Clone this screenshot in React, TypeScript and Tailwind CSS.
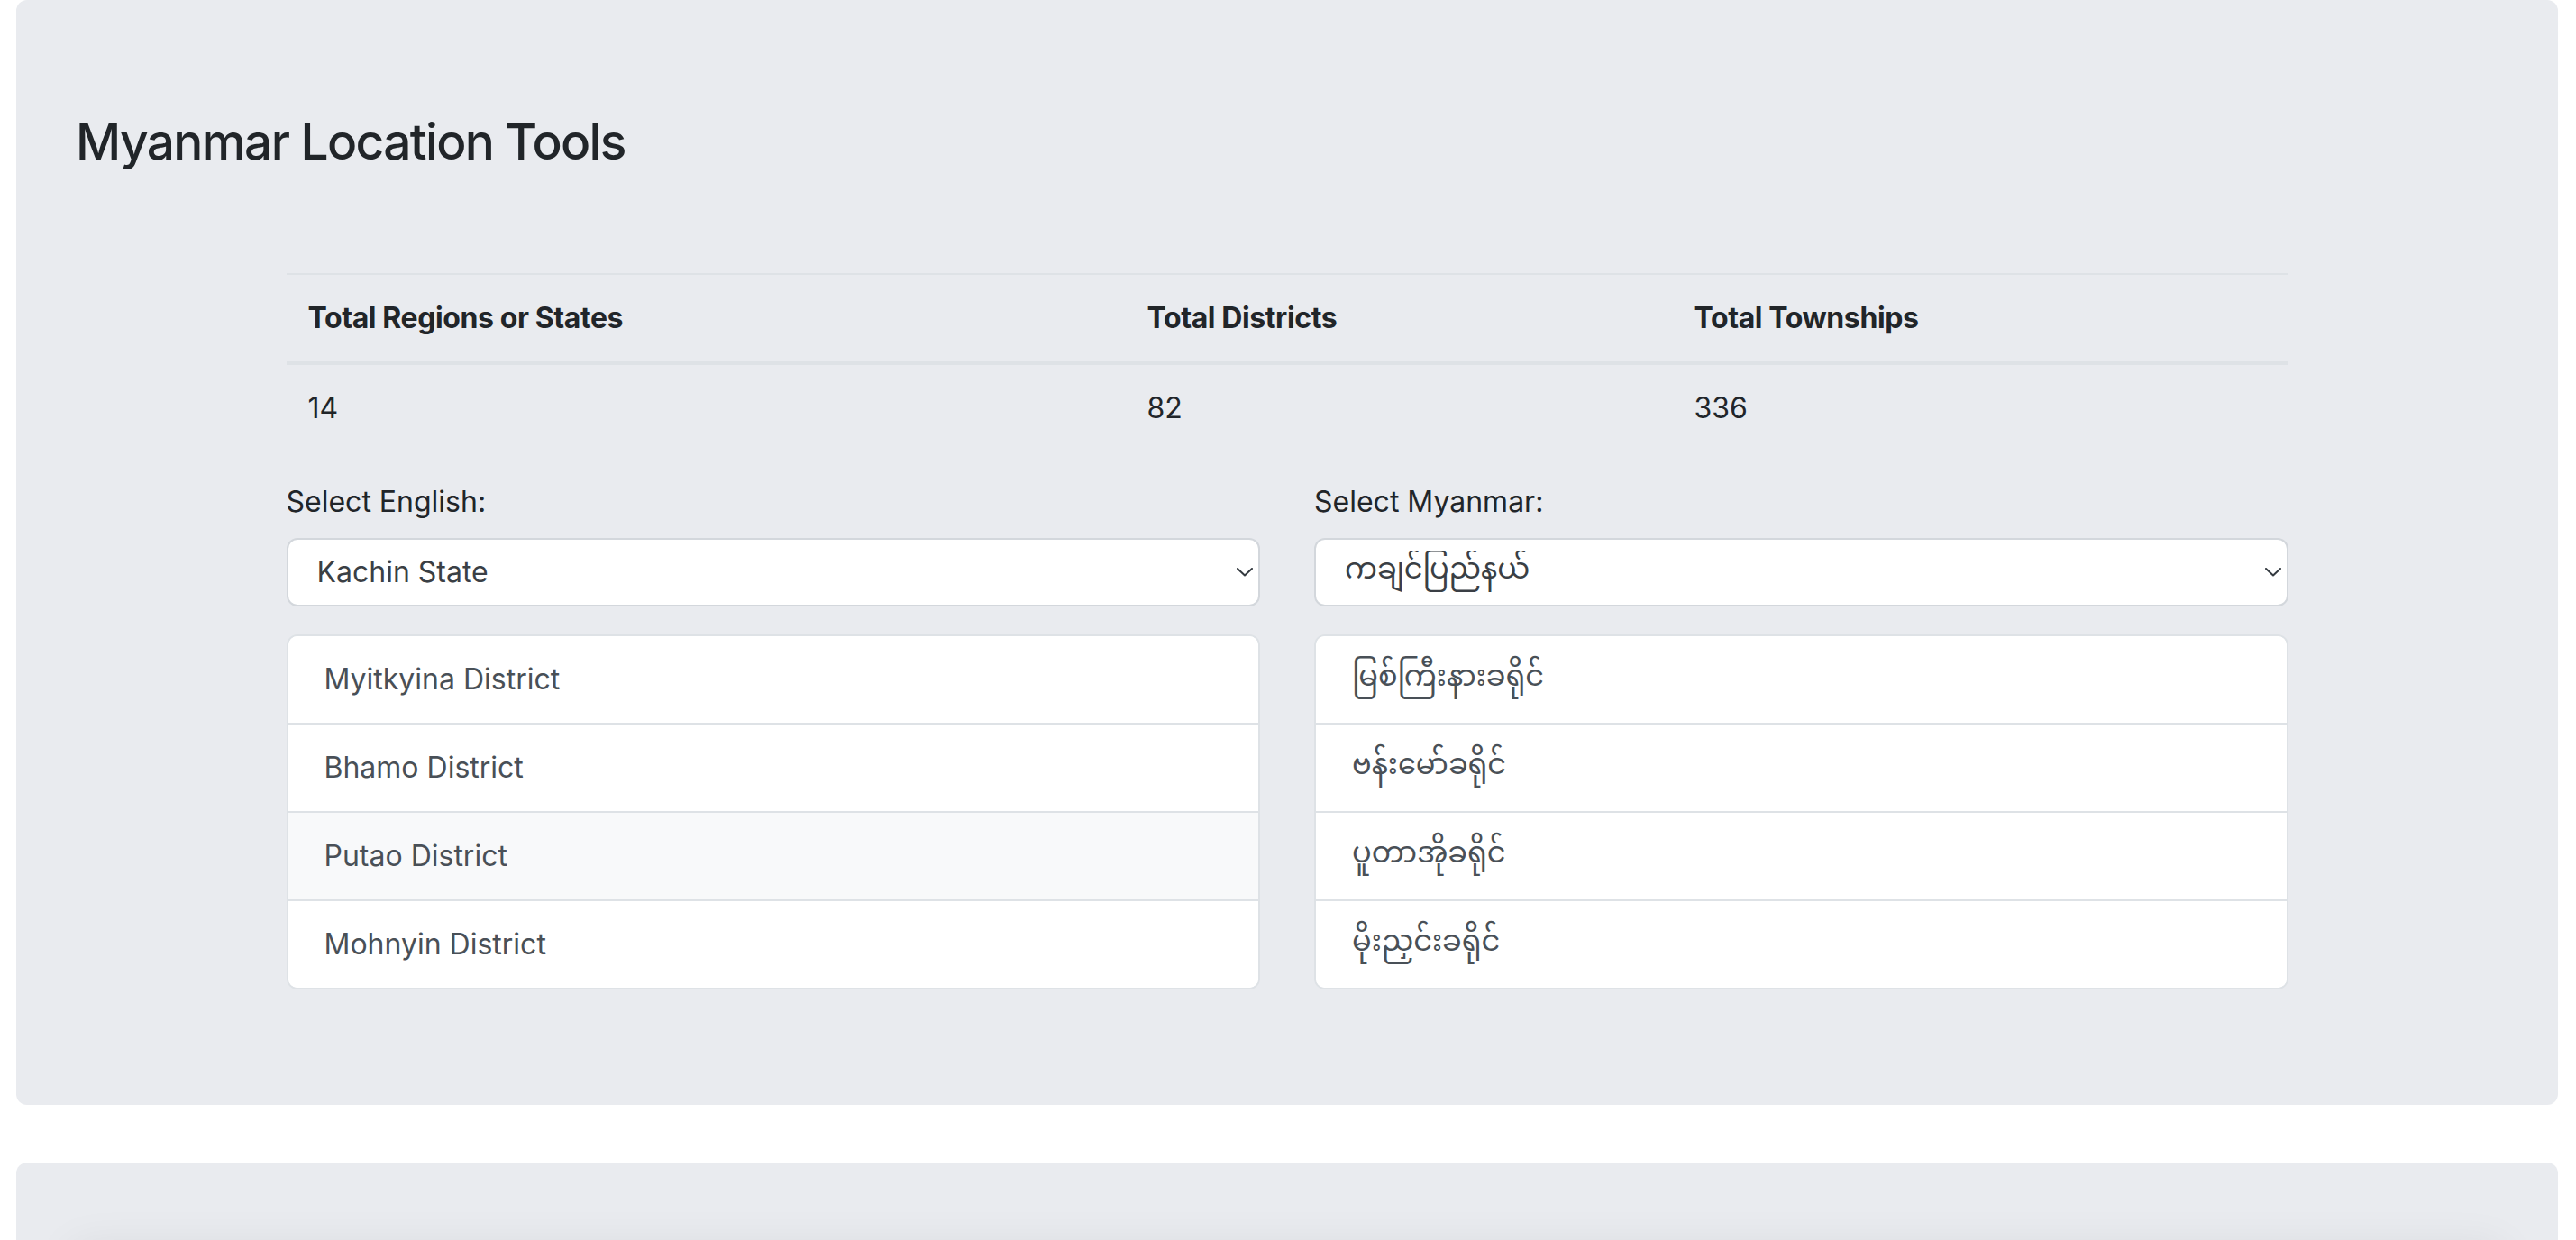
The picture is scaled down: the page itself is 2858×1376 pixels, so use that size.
import { useState } from "react";

const regions = [
  { en: "Kachin State", mm: "ကချင်ပြည်နယ်" },
];

const districts = [
  { en: "Myitkyina District", mm: "မြစ်ကြီးနားခရိုင်" },
  { en: "Bhamo District", mm: "ဗန်းမော်ခရိုင်" },
  { en: "Putao District", mm: "ပူတာအိုခရိုင်" },
  { en: "Mohnyin District", mm: "မိုးညှင်းခရိုင်" },
];

const mmFont =
  "font-['Noto_Sans_Myanmar','Padauk','Myanmar_Text','Noto_Sans','Inter',sans-serif]";

function Chevron() {
  return (
    <svg
      width="18"
      height="10"
      viewBox="0 0 18 10"
      className="pointer-events-none absolute right-[8px] top-1/2 -translate-y-1/2"
    >
      <polyline
        points="1,1 9,8.5 17,1"
        fill="none"
        stroke="#343a40"
        strokeWidth="2"
        strokeLinecap="round"
        strokeLinejoin="round"
      />
    </svg>
  );
}

function SelectBox({
  value,
  options,
  onChange,
  myanmar,
}: {
  value: number;
  options: string[];
  onChange: (i: number) => void;
  myanmar?: boolean;
}) {
  return (
    <div className="relative">
      <select
        value={value}
        onChange={(e) => onChange(Number(e.target.value))}
        className={`h-[76px] w-full appearance-none rounded-[12px] border-2 border-[#d3d7dc] bg-white pl-[32px] pr-[48px] text-[32px] text-[#3a3f45] outline-none ${
          myanmar ? mmFont : ""
        }`}
      >
        {options.map((o, i) => (
          <option key={o} value={i}>
            {o}
          </option>
        ))}
      </select>
      <Chevron />
    </div>
  );
}

function DistrictList({
  items,
  hovered,
  myanmar,
}: {
  items: string[];
  hovered: number;
  myanmar?: boolean;
}) {
  return (
    <ul className="mt-[31px] overflow-hidden rounded-[12px] border-2 border-[#dee2e6] bg-white">
      {items.map((item, i) => (
        <li
          key={item}
          className={`flex h-[48px] box-content items-center py-[24px] pl-[40px] text-[32px] text-[#495057] ${
            i > 0 ? "border-t-2 border-[#dee2e6]" : ""
          } ${i === hovered ? "bg-[#f8f9fa]" : "bg-white"} ${myanmar ? mmFont : ""}`}
        >
          {item}
        </li>
      ))}
    </ul>
  );
}

export default function App() {
  const [region, setRegion] = useState(0);

  return (
    <div className="min-h-screen bg-white font-['Inter','Liberation_Sans',sans-serif] text-[#212529]">
      <div className="ml-[18px] mr-[20px] rounded-[12px] bg-[#e9ebef] pb-[128px] pt-[124px]">
        <h3 className="pl-[66px] text-[55px] font-medium leading-[67px] tracking-[-1.6px]">
          Myanmar Location Tools
        </h3>

        <div className="mx-auto mt-[112px] w-[2221px]">
          <table className="w-full border-collapse text-left text-[32px] leading-[48px]">
            <thead>
              <tr className="border-b-4 border-t-2 border-[#dee2e6]">
                <th className="w-[931px] px-[24px] py-[24px] font-bold tracking-[-0.4px]">
                  Total Regions or States
                </th>
                <th className="w-[607px] px-[24px] py-[24px] font-bold tracking-[-0.4px]">
                  Total Districts
                </th>
                <th className="px-[24px] py-[24px] font-bold tracking-[-0.4px]">Total Townships</th>
              </tr>
            </thead>
            <tbody>
              <tr>
                <td className="px-[24px] py-[24px]">14</td>
                <td className="px-[24px] py-[24px]">82</td>
                <td className="px-[24px] py-[24px]">336</td>
              </tr>
            </tbody>
          </table>

          <div className="mt-[32px] grid grid-cols-2 gap-x-[60px]">
            <div>
              <label className="mb-[16px] block text-[32px] leading-[48px]">Select English:</label>
              <SelectBox
                value={region}
                onChange={setRegion}
                options={regions.map((r) => r.en)}
              />
              <DistrictList items={districts.map((d) => d.en)} hovered={2} />
            </div>
            <div>
              <label className="mb-[16px] block text-[32px] leading-[48px]">Select Myanmar:</label>
              <SelectBox
                value={region}
                onChange={setRegion}
                options={regions.map((r) => r.mm)}
                myanmar
              />
              <DistrictList items={districts.map((d) => d.mm)} hovered={-1} myanmar />
            </div>
          </div>
        </div>
      </div>

      <div className="ml-[18px] mr-[20px] mt-[64px] h-[260px] overflow-hidden rounded-[12px] bg-[#e9ebef] pt-[92px]">
        <div className="mx-[60px] h-[200px] rounded-[12px] bg-[#e9ebef] shadow-[0_0_48px_rgba(0,0,0,0.07)]" />
      </div>
    </div>
  );
}
